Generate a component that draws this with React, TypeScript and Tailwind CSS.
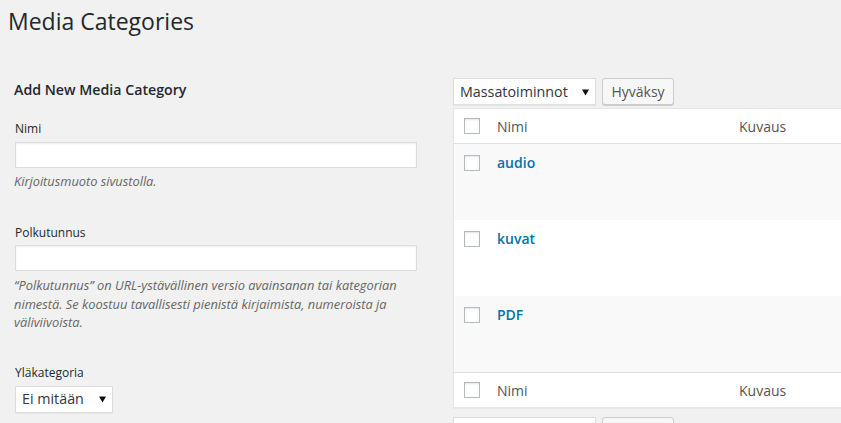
import React from "react";

function Caret() {
  return (
    <svg width="7" height="8" viewBox="0 0 7 8" className="shrink-0">
      <path d="M0 1.5 L7 1.5 L3.5 7.5 Z" fill="#111" />
    </svg>
  );
}

function FakeSelect({ label, w }: { label?: string; w: string }) {
  return (
    <div
      className={`${w} h-[27px] bg-white border border-[#ddd] shadow-[0_1px_1px_rgba(0,0,0,0.04)] flex items-center justify-between pl-[6px] pr-[6px] text-[14.3px] text-[#32373c]`}
    >
      <span>{label}</span>
      {label ? <Caret /> : null}
    </div>
  );
}

function Checkbox() {
  return <div className="w-[16px] h-[16px] bg-white border border-[#b4b9be] shadow-[inset_0_1px_2px_rgba(0,0,0,0.1)]" />;
}

function HeadRow({ border }: { border: string }) {
  return (
    <div className={`flex h-[35px] items-center bg-white ${border} border-[#e1e1e1]`}>
      <div className="w-[33px] pl-[10px] flex items-center">
        <Checkbox />
      </div>
      <div className="w-[242px] pl-[10px] text-[14px] text-[#555]">Nimi</div>
      <div className="pl-[10px] text-[14px] text-[#555]">Kuvaus</div>
    </div>
  );
}

function Row({ name, bg }: { name: string; bg: string }) {
  return (
    <div className={`flex h-[76px] items-start ${bg}`}>
      <div className="w-[33px] pl-[10px] pt-[11px]">
        <Checkbox />
      </div>
      <div className="pl-[10px] pt-[9px] text-[14px] leading-[20px] font-semibold text-[#0073aa]">{name}</div>
    </div>
  );
}

export default function App() {
  return (
    <div
      className="w-[841px] h-[423px] overflow-hidden bg-[#f1f1f1] text-[#23282d]"
      style={{ fontFamily: '"Open Sans", "Liberation Sans", sans-serif' }}
    >
      <h1 className="pl-[8px] pt-[7px] text-[23px] leading-[29px] font-normal text-[#23282d]">Media Categories</h1>
      <div className="flex">
        {/* left column */}
        <div className="w-[453px] pl-[15px] shrink-0">
          <h2 className="mt-[44px] -ml-[1px] text-[14.2px] leading-[20px] font-semibold">Add New Media Category</h2>
          <div className="mt-[20px] text-[12px] leading-[18px]">Nimi</div>
          <div className="mt-[4px] w-[402px] h-[26px] bg-white border border-[#ddd] shadow-[inset_0_1px_2px_rgba(0,0,0,0.07)]" />
          <p className="mt-[4px] -ml-[1px] text-[12.8px] leading-[19px] italic text-[#666]">Kirjoitusmuoto sivustolla.</p>
          <div className="mt-[33px] text-[12px] leading-[18px]">Polkutunnus</div>
          <div className="mt-[3px] w-[402px] h-[26px] bg-white border border-[#ddd] shadow-[inset_0_1px_2px_rgba(0,0,0,0.07)]" />
          <p className="mt-[5px] -ml-[1px] w-[405px] text-[12.85px] leading-[18.5px] italic text-[#666]">
            “Polkutunnus” on URL-ystävällinen versio avainsanan tai kategorian nimestä. Se koostuu tavallisesti pienistä kirjaimista, numeroista ja väliviivoista.
          </p>
          <div className="mt-[32px] text-[12px] leading-[18px]">Yläkategoria</div>
          <div className="mt-[4px]">
            <FakeSelect label="Ei mitään" w="w-[98px]" />
          </div>
        </div>
        {/* right column */}
        <div className="flex-1 min-w-0">
          <div className="mt-[42px] flex gap-[6px]">
            <FakeSelect label="Massatoiminnot" w="w-[143px]" />
            <div className="w-[72px] h-[27px] border border-[#ccc] rounded-[3px] bg-[#f7f7f7] shadow-[0_1px_0_#ccc] flex items-center justify-center text-[14px] text-[#555]">
              Hyväksy
            </div>
          </div>
          <div className="mt-[3px] w-[420px] border-l border-t border-b border-[#e5e5e5] shadow-[0_1px_1px_rgba(0,0,0,0.04)]">
            <HeadRow border="border-b" />
            <Row name="audio" bg="bg-[#f9f9f9]" />
            <Row name="kuvat" bg="bg-white" />
            <Row name="PDF" bg="bg-[#f9f9f9]" />
            <HeadRow border="border-t" />
          </div>
          <div className="mt-[9px] flex gap-[6px]">
            <FakeSelect w="w-[143px]" />
            <div className="w-[72px] h-[27px] border border-[#ccc] rounded-[3px] bg-[#f7f7f7]" />
          </div>
        </div>
      </div>
    </div>
  );
}
